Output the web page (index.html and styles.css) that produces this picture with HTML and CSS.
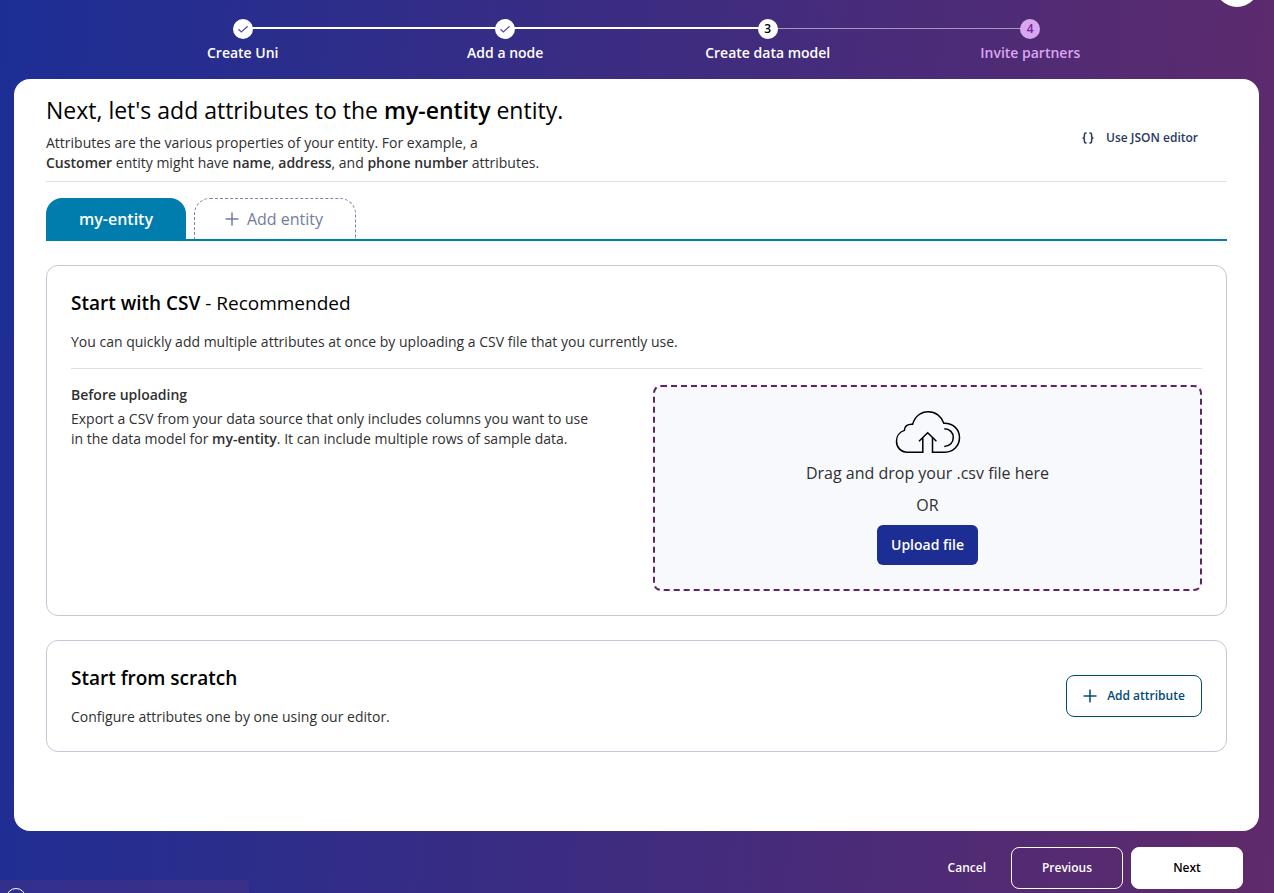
FILE: index.html
```html
<!DOCTYPE html>
<html lang="en">
<head>
<meta charset="utf-8">
<meta name="viewport" content="width=device-width, initial-scale=1">
<title>Create data model</title>
<link rel="stylesheet" href="styles.css">
</head>
<body>
<div class="app">
  <span class="avatar" aria-hidden="true"></span>

  <ol class="stepper">
    <li class="step done">
      <span class="dot"><svg width="12" height="12" viewBox="0 0 12 12" aria-hidden="true"><path d="M1.500 6.300 4.300 9 10.700 3.200" fill="none" stroke="#5548b8" stroke-width="1.200"/></svg></span>
      <span class="step-label">Create Uni</span>
    </li>
    <li class="step done">
      <span class="dot"><svg width="12" height="12" viewBox="0 0 12 12" aria-hidden="true"><path d="M1.500 6.300 4.300 9 10.700 3.200" fill="none" stroke="#5548b8" stroke-width="1.200"/></svg></span>
      <span class="step-label">Add a node</span>
    </li>
    <li class="step current" aria-current="step">
      <span class="dot">3</span>
      <span class="step-label">Create data model</span>
    </li>
    <li class="step upcoming">
      <span class="dot">4</span>
      <span class="step-label">Invite partners</span>
    </li>
  </ol>

  <main class="sheet">
    <header class="intro">
      <div class="intro-text">
        <h1>Next, let's add attributes to the <strong>my-entity</strong> entity.</h1>
        <p>Attributes are the various properties of your entity. For example, a <strong>Customer</strong> entity might have <strong>name</strong>, <strong>address</strong>, and <strong>phone number</strong> attributes.</p>
      </div>
      <button type="button" class="json-button">
        <svg width="12" height="12" viewBox="0 0 12 12" aria-hidden="true"><path d="M4.600 1H4Q2.400 1 2.400 2.500V4.300Q2.400 6 .6 6 2.400 6 2.400 7.700V9.500Q2.400 11 4 11H4.600M7.400 1H8Q9.600 1 9.600 2.500V4.300Q9.600 6 11.400 6 9.600 6 9.600 7.700V9.500Q9.600 11 8 11H7.400" fill="none" stroke="currentColor" stroke-width="1.500"/></svg>
        Use JSON editor
      </button>
    </header>

    <div class="tabs" role="tablist">
      <button type="button" class="tab active" role="tab" aria-selected="true">my-entity</button>
      <button type="button" class="tab add">
        <svg width="14" height="14" viewBox="0 0 14 14" aria-hidden="true"><path d="M7 .5V13.500M.5 7H13.500" fill="none" stroke="currentColor" stroke-width="1.500"/></svg>
        Add entity
      </button>
    </div>

    <section class="panel">
      <h2><strong>Start with CSV</strong> - Recommended</h2>
      <p class="lead">You can quickly add multiple attributes at once by uploading a CSV file that you currently use.</p>
      <div class="csv">
        <div class="before">
          <h3>Before uploading</h3>
          <p>Export a CSV from your data source that only includes columns you want to use in the data model for <strong>my-entity</strong>. It can include multiple rows of sample data.</p>
        </div>
        <div class="dropzone">
          <svg class="cloud" width="66" height="43" viewBox="1 0 66 43" aria-hidden="true"><g fill="none" stroke="#000" stroke-width="1.500"><path d="M28.500 42.200H13.500C6.500 42.200 2.500 37 2.500 31.200C2.500 26.300 5.600 21.900 10.400 20.400C10.400 16.300 13.400 13.900 18.600 14.300C20.800 6.300 27 1.700 34.300 1.700C41.500 1.700 47.500 6.300 49.800 13.200C58.800 12.800 65.500 19.200 65.500 27.500C65.500 36 59 42.200 51 42.200H38.500V27"/><path d="M28.800 42.900V27M25 31.200 33.700 22.700 42.400 31.200M50.300 18.800C55.800 18.800 59.300 22.700 59.300 27.500C59.300 32.300 55.800 36.500 50.300 36.500"/></g></svg>
          <p>Drag and drop your .csv file here</p>
          <p>OR</p>
          <button type="button" class="upload">Upload file</button>
        </div>
      </div>
    </section>

    <section class="panel scratch">
      <div>
        <h2><strong>Start from scratch</strong></h2>
        <p class="lead">Configure attributes one by one using our editor.</p>
      </div>
      <button type="button" class="add-attribute">
        <svg width="14" height="14" viewBox="0 0 14 14" aria-hidden="true"><path d="M7 .5V13.500M.5 7H13.500" fill="none" stroke="currentColor" stroke-width="1.500"/></svg>
        Add attribute
      </button>
    </section>
  </main>

  <footer class="actions">
    <button type="button" class="cancel">Cancel</button>
    <button type="button" class="previous">Previous</button>
    <button type="button" class="next">Next</button>
  </footer>

  <div class="help-bar" aria-hidden="true"><span class="help-ring"></span></div>
</div>
</body>
</html>
```
FILE: styles.css
```css
* {
  box-sizing: border-box;
}

body {
  margin: 0;
  font-family: "Open Sans", "Noto Sans", sans-serif;
  font-size: 14px;
  line-height: 20px;
  color: #303030;
}

h1, h2, h3, p {
  margin: 0;
  font-weight: 400;
}

strong {
  font-weight: 600;
}

button {
  display: flex;
  align-items: center;
  justify-content: center;
  padding: 0;
  border: 0;
  background: none;
  color: inherit;
  font: inherit;
  font-weight: 600;
  white-space: nowrap;
  cursor: pointer;
}

.app {
  position: relative;
  display: flex;
  flex-direction: column;
  min-height: 100vh;
  padding: 19px 15px 4px 14px;
  overflow: hidden;
  background: linear-gradient(95deg, #1c2e95, #602a6b);
}

.avatar {
  position: absolute;
  top: -37px;
  right: 15px;
  width: 44px;
  height: 44px;
  border-radius: 50%;
  background: #fff;
}

.stepper {
  display: flex;
  width: 100%;
  max-width: 1050px;
  margin: 0 auto 16px;
  padding: 0;
  list-style: none;
  color: #fff;
}

.step {
  flex: 1;
  display: flex;
  flex-direction: column;
  align-items: center;
  gap: 4px;
  position: relative;
  font-weight: 600;
}

.step:not(:last-child)::after {
  content: "";
  position: absolute;
  top: 8px;
  left: 50%;
  width: 100%;
  height: 2px;
  background: #fff;
}

.step.current:not(:last-child)::after {
  top: 9px;
  height: 1px;
  background: #a596bd;
}

.dot {
  position: relative;
  z-index: 1;
  display: flex;
  align-items: center;
  justify-content: center;
  width: 20px;
  height: 20px;
  border-radius: 50%;
  background: #fff;
  color: #000;
  font-size: 12px;
}

.upcoming {
  color: #d9a6f0;
}

.upcoming .dot {
  background: #d9a6f0;
  color: #7b1fa2;
}

.sheet {
  flex: 1;
  padding: 16px 32px;
  border-radius: 16px;
  background: #fff;
}

.intro {
  display: flex;
  align-items: center;
  justify-content: space-between;
  margin-bottom: 16px;
  padding-bottom: 8px;
  border-bottom: 1px solid #e0e0e0;
}

.intro h1 {
  margin-bottom: 8px;
  color: #000;
  font-size: 23px;
  line-height: 30px;
}

.intro p {
  max-width: 500px;
}

.json-button {
  gap: 12px;
  margin: 8px 29px 0 0;
  color: #283a63;
  font-size: 12px;
}

.tabs {
  display: flex;
  gap: 8px;
  margin-bottom: 24px;
  border-bottom: 2px solid #007dad;
}

.tab {
  height: 41px;
  border-radius: 16px 16px 0 0;
  font-size: 16px;
}

.tab.active {
  width: 140px;
  background: #007dad;
  color: #fff;
}

.tab.add {
  gap: 8px;
  width: 162px;
  padding-right: 2px;
  border: 1px dashed #7d84a5;
  border-bottom: 0;
  color: #737b9c;
  font-weight: 400;
}

.panel {
  margin-bottom: 24px;
  padding: 24px;
  border: 1px solid #c8c6d6;
  border-radius: 12px;
}

.panel h2 {
  margin-bottom: 16px;
  color: #000;
  font-size: 19px;
  line-height: 26px;
}

.csv {
  display: grid;
  grid-template-columns: 1fr 1fr;
  gap: 33px;
  margin-top: 16px;
  padding-top: 16px;
  border-top: 1px solid #e0e0e0;
}

.before h3 {
  margin-bottom: 4px;
  font-size: 14px;
  font-weight: 600;
}

.before p {
  max-width: 520px;
}

.dropzone {
  display: flex;
  flex-direction: column;
  align-items: center;
  gap: 8px;
  padding: 23px 24px 24px;
  border: 2px dashed #5f2468;
  border-radius: 8px;
  background: #f8f9fd;
  font-size: 16px;
  line-height: 24px;
}

.upload {
  width: 101px;
  height: 40px;
  border-radius: 6px;
  background: #1c2d94;
  color: #fff;
  font-size: 14px;
}

.scratch {
  display: flex;
  align-items: center;
  justify-content: space-between;
}

.add-attribute {
  gap: 10px;
  width: 136px;
  height: 42px;
  border: 1px solid #004b76;
  border-radius: 8px;
  color: #004b76;
  font-size: 12px;
}

.actions {
  display: flex;
  justify-content: flex-end;
  gap: 8px;
  padding: 16px 16px 0 0;
  color: #fff;
  font-size: 12px;
}

.cancel {
  padding: 0 17px;
}

.previous,
.next {
  width: 112px;
  height: 42px;
  border: 1px solid #fff;
  border-radius: 8px;
}

.next {
  background: #fff;
  color: #000;
}

.help-bar {
  position: absolute;
  bottom: 0;
  left: 0;
  width: 249px;
  height: 13px;
  overflow: hidden;
  background: rgba(80, 52, 134, 0.4);
}

.help-ring {
  position: absolute;
  top: 8px;
  left: 6px;
  width: 20px;
  height: 20px;
  border: 1px solid #fff;
  border-radius: 50%;
}
```
